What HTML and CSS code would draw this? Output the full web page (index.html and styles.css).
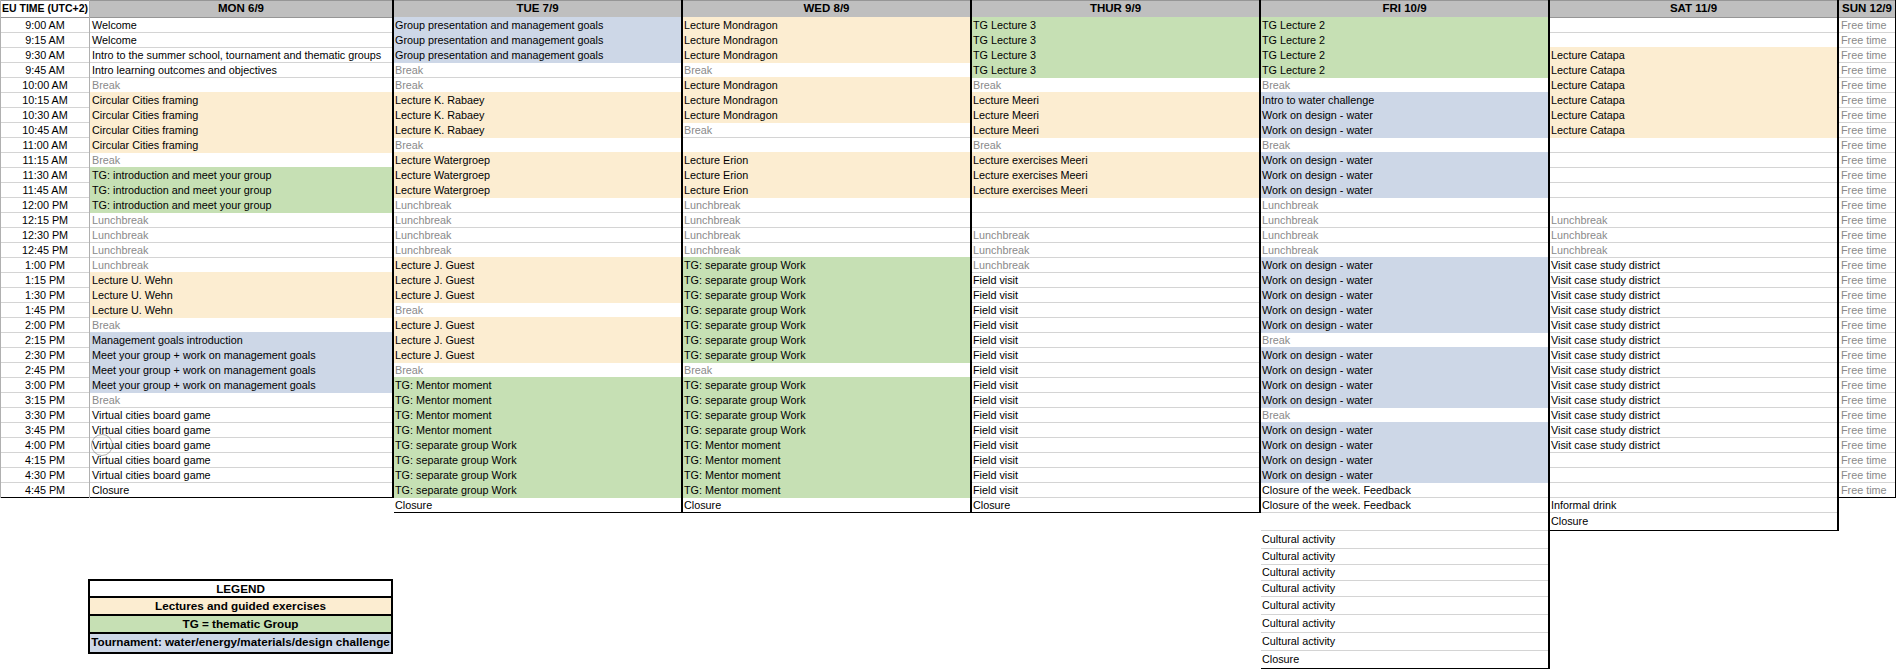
FILE: index.html
```html
<!DOCTYPE html>
<html lang="en">
<head>
<meta charset="utf-8">
<title>Summer school schedule</title>
<link rel="stylesheet" href="styles.css">
</head>
<body>
<main class="sheet">
  <div class="lead">
    <div class="lead-cols">
      <section class="col col-time">
        <div class="hd hd-time">EU TIME (UTC+2)</div>
        <div class="c">9:00 AM</div><div class="c">9:15 AM</div><div class="c">9:30 AM</div><div class="c">9:45 AM</div>
        <div class="c">10:00 AM</div><div class="c">10:15 AM</div><div class="c">10:30 AM</div><div class="c">10:45 AM</div>
        <div class="c">11:00 AM</div><div class="c">11:15 AM</div><div class="c">11:30 AM</div><div class="c">11:45 AM</div>
        <div class="c">12:00 PM</div><div class="c">12:15 PM</div><div class="c">12:30 PM</div><div class="c">12:45 PM</div>
        <div class="c">1:00 PM</div><div class="c">1:15 PM</div><div class="c">1:30 PM</div><div class="c">1:45 PM</div>
        <div class="c">2:00 PM</div><div class="c">2:15 PM</div><div class="c">2:30 PM</div><div class="c">2:45 PM</div>
        <div class="c">3:00 PM</div><div class="c">3:15 PM</div><div class="c">3:30 PM</div><div class="c">3:45 PM</div>
        <div class="c">4:00 PM</div><div class="c">4:15 PM</div><div class="c">4:30 PM</div><div class="c end">4:45 PM</div>
      </section>
      <section class="col col-day col-mon">
        <div class="hd">MON 6/9</div>
        <div class="c">Welcome</div>
        <div class="c">Welcome</div>
        <div class="c">Intro to the summer school, tournament and thematic groups</div>
        <div class="c">Intro learning outcomes and objectives</div>
        <div class="c off">Break</div>
        <div class="c tan">Circular Cities framing</div>
        <div class="c tan">Circular Cities framing</div>
        <div class="c tan">Circular Cities framing</div>
        <div class="c tan">Circular Cities framing</div>
        <div class="c off">Break</div>
        <div class="c grn">TG: introduction and meet your group</div>
        <div class="c grn">TG: introduction and meet your group</div>
        <div class="c grn">TG: introduction and meet your group</div>
        <div class="c off">Lunchbreak</div>
        <div class="c off">Lunchbreak</div>
        <div class="c off">Lunchbreak</div>
        <div class="c off">Lunchbreak</div>
        <div class="c tan">Lecture U. Wehn</div>
        <div class="c tan">Lecture U. Wehn</div>
        <div class="c tan">Lecture U. Wehn</div>
        <div class="c off">Break</div>
        <div class="c blu">Management goals introduction</div>
        <div class="c blu">Meet your group + work on management goals</div>
        <div class="c blu">Meet your group + work on management goals</div>
        <div class="c blu">Meet your group + work on management goals</div>
        <div class="c off">Break</div>
        <div class="c">Virtual cities board game</div>
        <div class="c">Virtual cities board game</div>
        <div class="c cursor-cell">Virtual cities board game<span class="cursor-ring"></span></div>
        <div class="c">Virtual cities board game</div>
        <div class="c">Virtual cities board game</div>
        <div class="c end">Closure</div>
      </section>
    </div>
    <section class="legend">
      <div class="lg lg-head">LEGEND</div>
      <div class="lg tan">Lectures and guided exercises</div>
      <div class="lg grn">TG = thematic Group</div>
      <div class="lg blu">Tournament: water/energy/materials/design challenge</div>
    </section>
  </div>

  <section class="col col-day">
    <div class="hd">TUE 7/9</div>
    <div class="c blu">Group presentation and management goals</div>
    <div class="c blu">Group presentation and management goals</div>
    <div class="c blu">Group presentation and management goals</div>
    <div class="c off">Break</div>
    <div class="c off">Break</div>
    <div class="c tan">Lecture K. Rabaey</div>
    <div class="c tan">Lecture K. Rabaey</div>
    <div class="c tan">Lecture K. Rabaey</div>
    <div class="c off">Break</div>
    <div class="c tan">Lecture Watergroep</div>
    <div class="c tan">Lecture Watergroep</div>
    <div class="c tan">Lecture Watergroep</div>
    <div class="c off">Lunchbreak</div>
    <div class="c off">Lunchbreak</div>
    <div class="c off">Lunchbreak</div>
    <div class="c off">Lunchbreak</div>
    <div class="c tan">Lecture J. Guest</div>
    <div class="c tan">Lecture J. Guest</div>
    <div class="c tan">Lecture J. Guest</div>
    <div class="c off">Break</div>
    <div class="c tan">Lecture J. Guest</div>
    <div class="c tan">Lecture J. Guest</div>
    <div class="c tan">Lecture J. Guest</div>
    <div class="c off">Break</div>
    <div class="c grn">TG: Mentor moment</div>
    <div class="c grn">TG: Mentor moment</div>
    <div class="c grn">TG: Mentor moment</div>
    <div class="c grn">TG: Mentor moment</div>
    <div class="c grn">TG: separate group Work</div>
    <div class="c grn">TG: separate group Work</div>
    <div class="c grn">TG: separate group Work</div>
    <div class="c grn">TG: separate group Work</div>
    <div class="c end">Closure</div>
  </section>

  <section class="col col-day">
    <div class="hd">WED 8/9</div>
    <div class="c tan">Lecture Mondragon</div>
    <div class="c tan">Lecture Mondragon</div>
    <div class="c tan">Lecture Mondragon</div>
    <div class="c off">Break</div>
    <div class="c tan">Lecture Mondragon</div>
    <div class="c tan">Lecture Mondragon</div>
    <div class="c tan">Lecture Mondragon</div>
    <div class="c off">Break</div>
    <div class="c"></div>
    <div class="c tan">Lecture Erion</div>
    <div class="c tan">Lecture Erion</div>
    <div class="c tan">Lecture Erion</div>
    <div class="c off">Lunchbreak</div>
    <div class="c off">Lunchbreak</div>
    <div class="c off">Lunchbreak</div>
    <div class="c off">Lunchbreak</div>
    <div class="c grn">TG: separate group Work</div>
    <div class="c grn">TG: separate group Work</div>
    <div class="c grn">TG: separate group Work</div>
    <div class="c grn">TG: separate group Work</div>
    <div class="c grn">TG: separate group Work</div>
    <div class="c grn">TG: separate group Work</div>
    <div class="c grn">TG: separate group Work</div>
    <div class="c off">Break</div>
    <div class="c grn">TG: separate group Work</div>
    <div class="c grn">TG: separate group Work</div>
    <div class="c grn">TG: separate group Work</div>
    <div class="c grn">TG: separate group Work</div>
    <div class="c grn">TG: Mentor moment</div>
    <div class="c grn">TG: Mentor moment</div>
    <div class="c grn">TG: Mentor moment</div>
    <div class="c grn">TG: Mentor moment</div>
    <div class="c end">Closure</div>
  </section>

  <section class="col col-day">
    <div class="hd">THUR 9/9</div>
    <div class="c grn">TG Lecture 3</div>
    <div class="c grn">TG Lecture 3</div>
    <div class="c grn">TG Lecture 3</div>
    <div class="c grn">TG Lecture 3</div>
    <div class="c off">Break</div>
    <div class="c tan">Lecture Meeri</div>
    <div class="c tan">Lecture Meeri</div>
    <div class="c tan">Lecture Meeri</div>
    <div class="c off">Break</div>
    <div class="c tan">Lecture exercises Meeri</div>
    <div class="c tan">Lecture exercises Meeri</div>
    <div class="c tan">Lecture exercises Meeri</div>
    <div class="c"></div>
    <div class="c"></div>
    <div class="c off">Lunchbreak</div>
    <div class="c off">Lunchbreak</div>
    <div class="c off">Lunchbreak</div>
    <div class="c">Field visit</div>
    <div class="c">Field visit</div>
    <div class="c">Field visit</div>
    <div class="c">Field visit</div>
    <div class="c">Field visit</div>
    <div class="c">Field visit</div>
    <div class="c">Field visit</div>
    <div class="c">Field visit</div>
    <div class="c">Field visit</div>
    <div class="c">Field visit</div>
    <div class="c">Field visit</div>
    <div class="c">Field visit</div>
    <div class="c">Field visit</div>
    <div class="c">Field visit</div>
    <div class="c">Field visit</div>
    <div class="c end">Closure</div>
  </section>

  <section class="col col-day">
    <div class="hd">FRI 10/9</div>
    <div class="c grn">TG Lecture 2</div>
    <div class="c grn">TG Lecture 2</div>
    <div class="c grn">TG Lecture 2</div>
    <div class="c grn">TG Lecture 2</div>
    <div class="c off">Break</div>
    <div class="c blu">Intro to water challenge</div>
    <div class="c blu">Work on design - water</div>
    <div class="c blu">Work on design - water</div>
    <div class="c off">Break</div>
    <div class="c blu">Work on design - water</div>
    <div class="c blu">Work on design - water</div>
    <div class="c blu">Work on design - water</div>
    <div class="c off">Lunchbreak</div>
    <div class="c off">Lunchbreak</div>
    <div class="c off">Lunchbreak</div>
    <div class="c off">Lunchbreak</div>
    <div class="c blu">Work on design - water</div>
    <div class="c blu">Work on design - water</div>
    <div class="c blu">Work on design - water</div>
    <div class="c blu">Work on design - water</div>
    <div class="c blu">Work on design - water</div>
    <div class="c off">Break</div>
    <div class="c blu">Work on design - water</div>
    <div class="c blu">Work on design - water</div>
    <div class="c blu">Work on design - water</div>
    <div class="c blu">Work on design - water</div>
    <div class="c off">Break</div>
    <div class="c blu">Work on design - water</div>
    <div class="c blu">Work on design - water</div>
    <div class="c blu">Work on design - water</div>
    <div class="c blu">Work on design - water</div>
    <div class="c">Closure of the week. Feedback</div>
    <div class="c">Closure of the week. Feedback</div>
    <div class="c tall"></div>
    <div class="c tall">Cultural activity</div>
    <div class="c mid">Cultural activity</div>
    <div class="c mid">Cultural activity</div>
    <div class="c mid">Cultural activity</div>
    <div class="c tall">Cultural activity</div>
    <div class="c tall">Cultural activity</div>
    <div class="c tall">Cultural activity</div>
    <div class="c tall end">Closure</div>
  </section>

  <section class="col col-day">
    <div class="hd">SAT 11/9</div>
    <div class="c"></div>
    <div class="c"></div>
    <div class="c tan">Lecture Catapa</div>
    <div class="c tan">Lecture Catapa</div>
    <div class="c tan">Lecture Catapa</div>
    <div class="c tan">Lecture Catapa</div>
    <div class="c tan">Lecture Catapa</div>
    <div class="c tan">Lecture Catapa</div>
    <div class="c"></div>
    <div class="c"></div>
    <div class="c"></div>
    <div class="c"></div>
    <div class="c"></div>
    <div class="c off">Lunchbreak</div>
    <div class="c off">Lunchbreak</div>
    <div class="c off">Lunchbreak</div>
    <div class="c">Visit case study district</div>
    <div class="c">Visit case study district</div>
    <div class="c">Visit case study district</div>
    <div class="c">Visit case study district</div>
    <div class="c">Visit case study district</div>
    <div class="c">Visit case study district</div>
    <div class="c">Visit case study district</div>
    <div class="c">Visit case study district</div>
    <div class="c">Visit case study district</div>
    <div class="c">Visit case study district</div>
    <div class="c">Visit case study district</div>
    <div class="c">Visit case study district</div>
    <div class="c">Visit case study district</div>
    <div class="c"></div>
    <div class="c"></div>
    <div class="c"></div>
    <div class="c">Informal drink</div>
    <div class="c tall end">Closure</div>
  </section>

  <section class="col col-day col-sun">
    <div class="hd">SUN 12/9</div>
    <div class="c off">Free time</div><div class="c off">Free time</div><div class="c off">Free time</div><div class="c off">Free time</div>
    <div class="c off">Free time</div><div class="c off">Free time</div><div class="c off">Free time</div><div class="c off">Free time</div>
    <div class="c off">Free time</div><div class="c off">Free time</div><div class="c off">Free time</div><div class="c off">Free time</div>
    <div class="c off">Free time</div><div class="c off">Free time</div><div class="c off">Free time</div><div class="c off">Free time</div>
    <div class="c off">Free time</div><div class="c off">Free time</div><div class="c off">Free time</div><div class="c off">Free time</div>
    <div class="c off">Free time</div><div class="c off">Free time</div><div class="c off">Free time</div><div class="c off">Free time</div>
    <div class="c off">Free time</div><div class="c off">Free time</div><div class="c off">Free time</div><div class="c off">Free time</div>
    <div class="c off">Free time</div><div class="c off">Free time</div><div class="c off">Free time</div><div class="c off end">Free time</div>
  </section>
</main>
</body>
</html>
```

FILE: styles.css
```css
html, body {
  margin: 0;
  padding: 0;
  background: #fff;
}

body {
  font-family: "Liberation Sans", Arial, sans-serif;
  font-size: 10.8px;
  color: #000;
}

.sheet {
  display: flex;
  align-items: flex-start;
  width: 1896px;
  height: 669px;
  overflow: hidden;
}

.lead {
  display: flex;
  flex-direction: column;
  flex: none;
}

.lead-cols {
  display: flex;
  align-items: flex-start;
}

.col {
  display: flex;
  flex-direction: column;
  flex: none;
  box-sizing: border-box;
  width: 289px;
  border-right: 2px solid #000;
}

.col-time {
  width: 90px;
  border-left: 1px solid #b0b0b0;
  border-right: 1px solid #b0b0b0;
  text-align: center;
}

.col-mon {
  width: 304px;
}

.col-sun {
  width: 57px;
  border-right-width: 1px;
}

.hd {
  box-sizing: border-box;
  height: 18px;
  line-height: 15px;
  text-align: center;
  font-size: 11.5px;
  font-weight: 700;
  white-space: nowrap;
  background: #bfbfbf;
  border-top: 1px solid #969696;
  border-bottom: 1px solid #969696;
}

.hd-time {
  font-size: 10.5px;
  background: #fff;
}

.c {
  box-sizing: border-box;
  height: 15px;
  line-height: 14px;
  padding-left: 1px;
  white-space: nowrap;
  overflow: hidden;
  border-bottom: 1px solid #d4d4d4;
}

.col-mon .c {
  padding-left: 2px;
}

.col-sun .c {
  padding-left: 2px;
}

.col-time .c {
  padding-left: 0;
}

.mid {
  height: 16px;
  line-height: 15px;
}

.tall {
  height: 18px;
  line-height: 17px;
}

.c.end {
  border-bottom: 1px solid #000;
}

.off {
  color: #8a8a8a;
}

.tan,
.grn,
.blu {
  border-bottom-color: transparent;
}

.tan {
  background: #fcedd1;
  box-shadow: 0 -1px 0 #fcedd1;
}

.grn {
  background: #c6e0b4;
  box-shadow: 0 -1px 0 #c6e0b4;
}

.blu {
  background: #cdd7e7;
  box-shadow: 0 -1px 0 #cdd7e7;
}

.cursor-cell {
  position: relative;
  overflow: visible;
}

.cursor-ring {
  position: absolute;
  left: 1px;
  top: -4px;
  width: 22px;
  height: 22px;
  box-sizing: border-box;
  border: 1px solid rgba(110, 110, 110, 0.55);
  border-radius: 50%;
}

.legend {
  box-sizing: border-box;
  width: 305px;
  margin: 81px 0 0 88px;
  border: 2px solid #000;
  font-size: 11.7px;
  font-weight: 700;
  text-align: center;
  white-space: nowrap;
}

.lg {
  box-sizing: border-box;
  height: 18px;
  line-height: 16px;
  border-bottom: 2px solid #000;
  box-shadow: none;
}

.lg:last-child {
  border-bottom: 0;
}

.lg-head {
  height: 17px;
}
```
